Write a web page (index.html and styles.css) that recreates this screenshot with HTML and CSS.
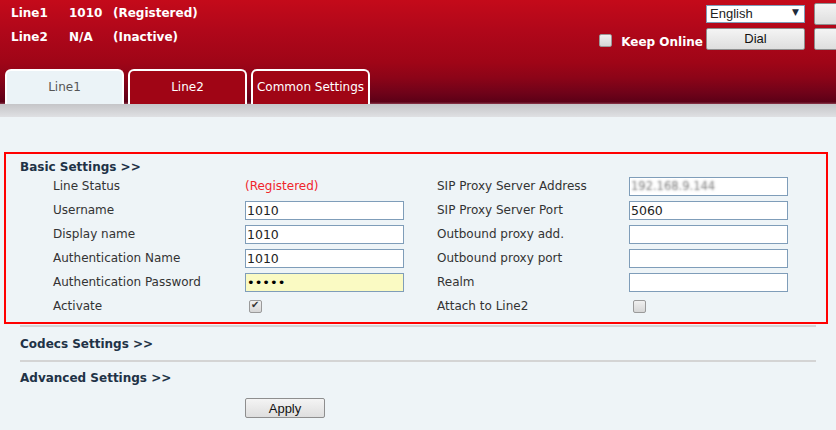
FILE: index.html
```html
<!DOCTYPE html>
<html>
<head>
<meta charset="utf-8">
<link rel="stylesheet" href="styles.css">
</head>
<body>
<header class="header">
  <div class="top">
    <div class="status">
      <div class="srow"><span class="c1">Line1</span><span class="c2">1010</span><span>(Registered)</span></div>
      <div class="srow"><span class="c1">Line2</span><span class="c2">N/A</span><span>(Inactive)</span></div>
    </div>
    <div class="controls">
      <div class="blank"></div>
      <div class="sel-wrap"><select class="sel"><option>English</option></select><span class="arrow">▼</span></div>
      <button class="btn side"></button>
      <label class="keep"><input type="checkbox" class="cb"><span>Keep Online</span></label>
      <button class="btn dial">Dial</button>
      <button class="btn side"></button>
    </div>
  </div>
  <nav class="tabs">
    <div class="tab active">Line1</div>
    <div class="tab">Line2</div>
    <div class="tab">Common Settings</div>
  </nav>
</header>
<div class="band"></div>
<main class="content">
  <section class="sec">
    <div class="hl">
      <h3 class="sec-title first">Basic Settings &gt;&gt;</h3>
      <div class="grid">
        <div class="lbl">Line Status</div>
        <div class="val"><span class="reg">(Registered)</span></div>
        <div class="lbl">SIP Proxy Server Address</div>
        <div class="val"><input class="txt blur" value="192.168.9.144"></div>

        <div class="lbl">Username</div>
        <div class="val"><input class="txt" value="1010"></div>
        <div class="lbl">SIP Proxy Server Port</div>
        <div class="val"><input class="txt" value="5060"></div>

        <div class="lbl">Display name</div>
        <div class="val"><input class="txt" value="1010"></div>
        <div class="lbl">Outbound proxy add.</div>
        <div class="val"><input class="txt" value=""></div>

        <div class="lbl">Authentication Name</div>
        <div class="val"><input class="txt" value="1010"></div>
        <div class="lbl">Outbound proxy port</div>
        <div class="val"><input class="txt" value=""></div>

        <div class="lbl">Authentication Password</div>
        <div class="val"><input class="txt pw" type="password" value="12345"></div>
        <div class="lbl">Realm</div>
        <div class="val"><input class="txt" value=""></div>

        <div class="lbl">Activate</div>
        <div class="val"><input type="checkbox" class="cb" checked></div>
        <div class="lbl">Attach to Line2</div>
        <div class="val"><input type="checkbox" class="cb"></div>
      </div>
    </div>
  </section>
  <section class="sec">
    <h3 class="sec-title">Codecs Settings &gt;&gt;</h3>
  </section>
  <section class="sec last">
    <h3 class="sec-title">Advanced Settings &gt;&gt;</h3>
  </section>
  <div class="actions"><button class="btn apply">Apply</button></div>
</main>
</body>
</html>
```
FILE: styles.css
```css
* { box-sizing: border-box; }
html, body { margin: 0; padding: 0; }
body {
  background: #eef4f7;
  font-family: "DejaVu Sans", Verdana, sans-serif;
  font-size: 12px;
  color: #333;
  overflow: hidden;
}
.header {
  height: 104px;
  background: linear-gradient(to bottom, #c40a1a 0%, #b0071a 30%, #9f0517 60%, #8c0418 75%, #6e0219 90%, #5c0016 98%, #8a3a4c 100%);
  overflow: hidden;
}
.top {
  height: 69px;
  display: flex;
  align-items: flex-start;
}
.status {
  padding-left: 11px;
  padding-top: 1px;
  color: #fff;
  font-weight: bold;
  font-size: 12px;
}
.srow { line-height: 24px; display: flex; }
.c1 { width: 58px; }
.c2 { width: 44px; }
.controls {
  margin-left: auto;
  margin-right: -58px;
  padding-top: 3px;
  display: grid;
  grid-template-columns: auto 99px 89px;
  grid-template-rows: 21px 21px;
  row-gap: 4px;
  align-items: center;
}
.sel-wrap { position: relative; height: 18px; }
.sel {
  appearance: none;
  -webkit-appearance: none;
  width: 99px;
  height: 18px;
  border: 1px solid #7f9db9;
  background: #fff;
  font-family: "Liberation Sans", Arial, sans-serif;
  font-size: 13px;
  color: #222;
  padding: 0 0 0 3px;
  margin: 0;
  border-radius: 0;
  outline: none;
}
.arrow {
  position: absolute;
  right: 6px;
  top: 2px;
  font-size: 9px;
  color: #1e2a3a;
  pointer-events: none;
}
.btn {
  font-family: "Liberation Sans", Arial, sans-serif;
  font-size: 13px;
  color: #111;
  background: linear-gradient(to bottom, #f4f4f4, #dedede);
  border: 1px solid #8e8e8e;
  border-radius: 2px;
  padding: 0;
  margin: 0;
}
.side { width: 80px; height: 22px; margin-left: 9px; }
.dial { width: 99px; height: 22px; }
.keep {
  display: flex;
  align-items: center;
  color: #fff;
  font-weight: bold;
  font-size: 12px;
  padding-right: 3px;
  padding-top: 3px;
}
.keep .cb { margin: 0 9px 0 0; }
.keep span { position: relative; top: 2px; }
.cb {
  appearance: none;
  -webkit-appearance: none;
  width: 13px;
  height: 13px;
  border: 1px solid #9a9a9a;
  border-radius: 2px;
  background: linear-gradient(to bottom, #f0f0f0, #d6d6d6);
  margin: 3px 3px 3px 4px;
  position: relative;
  vertical-align: middle;
}
.cb:checked::after {
  content: "✔";
  position: absolute;
  left: 1px;
  top: -2px;
  font-size: 10px;
  color: #333;
}
.tabs {
  height: 35px;
  display: flex;
  gap: 4px;
  padding-left: 5px;
}
.tab {
  width: 119px;
  height: 35px;
  border: 2px solid #fff;
  border-bottom: none;
  border-radius: 6px 6px 0 0;
  background: #a00515;
  color: #fff;
  display: flex;
  align-items: center;
  justify-content: center;
  padding-bottom: 1px;
}
.tab.active {
  background: #ebf3f7;
  color: #555;
}
.band {
  height: 13px;
  background: linear-gradient(to bottom, #c5c5c8, #dfe0e3);
}
.content { padding-top: 35px; }
.sec {
  margin: 0 20px;
  border-bottom: 2px solid #d4d4d4;
  padding: 9px 0 8px;
}
.sec:first-child { padding: 0 0 1px; }
.sec.last { border-bottom: none; padding: 8px 0 0; }
.hl {
  margin: 0 -12px 0 -16px;
  border: 2px solid #ff0000;
  padding: 4px 0 4px 14px;
}
.sec-title {
  margin: 0;
  font-size: 12px;
  line-height: 16px;
  font-weight: bold;
  color: #213246;
}
.sec-title.first { position: relative; top: 1px; }
.grid {
  margin-left: 33px;
  display: grid;
  grid-template-columns: 192px 192px 192px 192px;
  grid-auto-rows: 24px;
  align-items: center;
}
.lbl { color: #333; }
.val { display: flex; align-items: center; }
.reg { color: #f0252b; }
.txt {
  width: 159px;
  height: 19px;
  border: 1px solid #7f9db9;
  background: #fff;
  font-family: "DejaVu Sans", Verdana, sans-serif;
  font-size: 12.5px;
  color: #222;
  padding: 0 1px;
  margin: 0;
  outline: none;
}
.txt.pw { background: #fafac3; font-size: 13px; letter-spacing: 0; color: #000; }
.txt.blur { color: transparent; text-shadow: 0 0 2.5px #7a7a7a; font-size: 11.5px; }
.actions { padding: 12px 0 0 245px; }
.apply { width: 80px; height: 20px; }
```
